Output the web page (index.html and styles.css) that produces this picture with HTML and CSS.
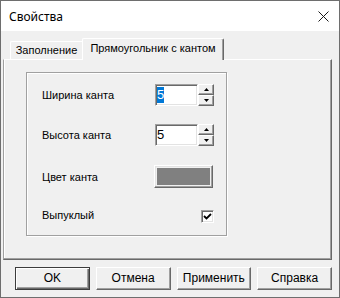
FILE: index.html
```html
<!DOCTYPE html>
<html lang="ru">
<head>
<meta charset="utf-8">
<title>Свойства</title>
<link rel="stylesheet" href="styles.css">
</head>
<body>
<div class="window">
  <div class="titlebar">
    <span class="title">Свойства</span>
    <svg class="close" viewBox="0 0 11 11" width="11" height="11"><path d="M0.5 0.5 L10.5 10.5 M10.5 0.5 L0.5 10.5" stroke="#1a1a1a" stroke-width="1" fill="none"/></svg>
  </div>
  <div class="client">
    <div class="tabs">
      <div class="tab">Заполнение</div>
      <div class="tab active">Прямоугольник с кантом</div>
    </div>
    <div class="panel">
      <div class="group">
        <div class="row">
          <span class="label">Ширина канта</span>
          <div class="spin">
            <div class="spin-input"><span class="sel">5</span></div>
            <div class="spin-btns">
              <div class="spin-btn"><svg class="tri" viewBox="0 0 5 3" width="5" height="3"><polygon points="2.5,0 5,3 0,3" fill="#000"/></svg></div>
              <div class="spin-btn"><svg class="tri" viewBox="0 0 5 3" width="5" height="3"><polygon points="0,0 5,0 2.5,3" fill="#000"/></svg></div>
            </div>
          </div>
        </div>
        <div class="row row2">
          <span class="label">Высота канта</span>
          <div class="spin">
            <div class="spin-input"><span class="val">5</span></div>
            <div class="spin-btns">
              <div class="spin-btn"><svg class="tri" viewBox="0 0 5 3" width="5" height="3"><polygon points="2.5,0 5,3 0,3" fill="#000"/></svg></div>
              <div class="spin-btn"><svg class="tri" viewBox="0 0 5 3" width="5" height="3"><polygon points="0,0 5,0 2.5,3" fill="#000"/></svg></div>
            </div>
          </div>
        </div>
        <div class="row row3">
          <span class="label">Цвет канта</span>
          <div class="colorbtn"><div class="swatch"></div></div>
        </div>
        <div class="row row4">
          <span class="label">Выпуклый</span>
          <div class="check"><svg viewBox="0 0 9 9" width="9" height="9"><path d="M1 4 L3.5 6.5 L8 2" stroke="#000" stroke-width="1.8" fill="none"/></svg></div>
        </div>
      </div>
    </div>
    <div class="buttons">
      <div class="btn default">OK</div>
      <div class="btn">Отмена</div>
      <div class="btn">Применить</div>
      <div class="btn">Справка</div>
    </div>
  </div>
</div>
</body>
</html>
```

FILE: styles.css
```css
* { box-sizing: border-box; }
html, body { margin: 0; padding: 0; }
body {
  width: 340px;
  height: 298px;
  overflow: hidden;
  background: #f0f0f0;
  font-family: "Liberation Sans", Arial, sans-serif;
  font-size: 11px;
  color: #000;
}
.window {
  width: 340px;
  height: 298px;
  border: 1px solid #6e6e6e;
  background: #f0f0f0;
  display: flex;
  flex-direction: column;
}
.titlebar {
  flex: none;
  height: 30px;
  background: #fff;
  display: flex;
  align-items: center;
  justify-content: space-between;
  padding: 0 10px 0 8px;
}
.title {
  font-family: "Noto Sans", sans-serif;
  font-size: 12px;
  color: #000;
}
.close { display: block; }
.client {
  flex: 1;
  display: flex;
  flex-direction: column;
  padding: 7px 7px 0 2px;
}
.tabs {
  flex: none;
  height: 21px;
  display: flex;
  align-items: flex-end;
  padding-left: 7px;
  position: relative;
  z-index: 1;
}
.tab {
  height: 18px;
  line-height: 17px;
  width: 72px;
  text-align: center;
  white-space: nowrap;
  border-top: 1px solid #fff;
  border-left: 1px solid #fff;
  border-top-left-radius: 2px;
}
.tab.active {
  width: 142px;
  height: 22px;
  margin-bottom: -1px;
  padding-top: 1px;
  background: #f0f0f0;
  border-right: 1px solid #696969;
  border-top-right-radius: 2px;
  box-shadow: inset -1px 0 0 #a0a0a0;
}
.panel {
  flex: none;
  height: 201px;
  border: 1px solid;
  border-color: #fff #696969 #696969 #a0a0a0;
  box-shadow: inset -1px -1px 0 #a0a0a0, inset 1px 0 0 #fff;
  padding: 12px 0 0 22px;
}
.group {
  width: 201px;
  height: 164px;
  border: 1px solid #a0a0a0;
  box-shadow: inset 1px 1px 0 #fff, 1px 1px 0 #fff;
  padding: 11px 0 0 15px;
}
.row {
  display: flex;
  align-items: center;
  height: 22px;
}
.row2 { margin-top: 18px; }
.row3 { margin-top: 19px; height: 23px; }
.row4 { margin-top: 22px; height: 13px; }
.row4 .label { margin-bottom: 4px; }
.label {
  width: 112px;
  flex: none;
  white-space: nowrap;
}
.spin {
  display: flex;
  margin-left: 1px;
}
.spin-input {
  width: 43px;
  height: 22px;
  background: #fff;
  border: 1px solid;
  border-color: #a0a0a0 #fff #fff #a0a0a0;
  box-shadow: inset 1px 1px 0 #696969, inset -1px -1px 0 #e3e3e3;
  font-size: 13px;
  display: flex;
  align-items: center;
  padding-left: 1px;
}
.sel {
  background: #0078d7;
  color: #fff;
  padding: 1px 0;
  line-height: 14px;
}
.val { line-height: 14px; }
.spin-btns {
  display: flex;
  flex-direction: column;
}
.spin-btn {
  width: 16px;
  height: 11px;
  background: #f0f0f0;
  border: 1px solid;
  border-color: #fff #696969 #696969 #fff;
  box-shadow: inset -1px -1px 0 #a0a0a0;
  display: flex;
  align-items: center;
  justify-content: center;
}
.tri { display: block; }
.colorbtn {
  width: 59px;
  height: 23px;
  border: 1px solid;
  border-color: #fff #696969 #696969 #fff;
  box-shadow: inset -1px -1px 0 #a0a0a0, inset 1px 1px 0 #e3e3e3;
  padding: 2px;
}
.swatch {
  width: 100%;
  height: 100%;
  background: #808080;
}
.check {
  margin-left: 47px;
  width: 13px;
  height: 13px;
  background: #fff;
  border: 1px solid;
  border-color: #a0a0a0 #fff #fff #a0a0a0;
  box-shadow: inset 1px 1px 0 #696969, inset -1px -1px 0 #e3e3e3;
  display: flex;
  align-items: center;
  justify-content: center;
}
.check svg { display: block; }
.buttons {
  flex: none;
  display: flex;
  gap: 6px;
  margin-top: 7px;
  padding-left: 12px;
}
.btn {
  width: 75px;
  height: 23px;
  font-size: 12px;
  line-height: 21px;
  text-align: center;
  border: 1px solid;
  border-color: #fff #696969 #696969 #fff;
  box-shadow: inset -1px -1px 0 #a0a0a0;
}
.btn.default {
  border-color: #3c3c3c;
  box-shadow: inset 1px 1px 0 #fff, inset -1px -1px 0 #696969, inset -2px -2px 0 #a0a0a0;
}
```
